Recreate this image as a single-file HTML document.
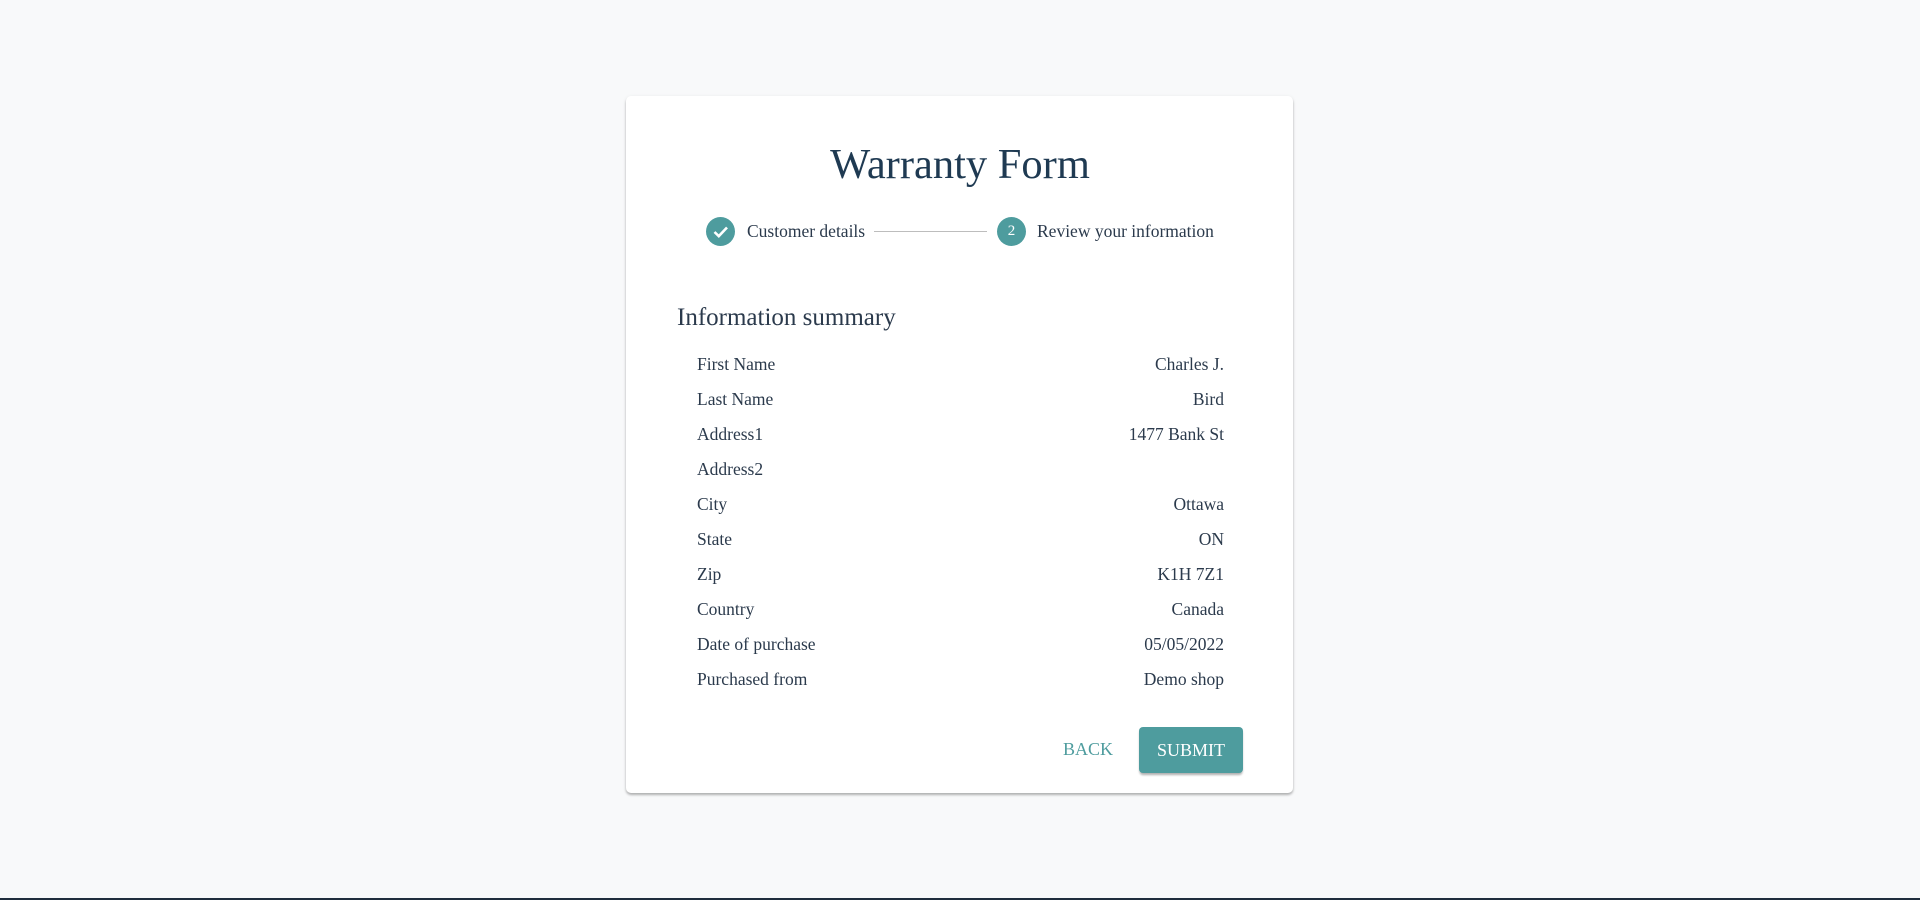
<!DOCTYPE html>
<html><head><meta charset="utf-8"><style>
html,body{margin:0;padding:0;width:1920px;height:900px;background:#f8f9fa;overflow:hidden;font-family:"Liberation Serif",serif;color:#2b3a4c}
.card{position:absolute;left:626px;top:96px;width:667px;height:697px;background:#fff;border-radius:5px;box-shadow:0 2px 2px rgba(0,0,0,.25),0 1px 4px rgba(0,0,0,.08)}
.abs{position:absolute;white-space:nowrap}
h1{position:absolute;margin:0;left:0;width:1920px;text-align:center;top:135px;font-weight:normal;font-size:42.5px;line-height:60px;color:#1f3a52}
.circ{position:absolute;width:29px;height:29px;border-radius:50%;background:#4e9c9e;color:#fff;font-size:15px;text-align:center;line-height:29px}
.step{font-size:17.5px;line-height:22px}
.row{position:absolute;left:697px;width:527px;font-size:17.5px;line-height:22px;display:flex;justify-content:space-between}
.sub{position:absolute;left:1139px;top:727px;width:104px;height:46px;background:#4e9c9e;border-radius:4px;color:#fff;font-size:18px;text-align:center;line-height:46px;box-shadow:0 3px 2px -1px rgba(0,0,0,.2),0 2px 2px rgba(0,0,0,.14)}
</style></head><body>
<div class="card"></div>
<h1>Warranty Form</h1>
<div class="circ" style="left:706px;top:217px"><svg width="29" height="29" viewBox="0 0 29 29"><path d="M8.5 15 L12.8 19.2 L21 10.5" fill="none" stroke="#fff" stroke-width="2.6"/></svg></div>
<div class="abs step" style="left:747px;top:220px">Customer details</div>
<div class="abs" style="left:874px;top:231px;width:113px;height:1px;background:#bdbdbd"></div>
<div class="circ" style="left:997px;top:217px">2</div>
<div class="abs step" style="left:1037px;top:220px">Review your information</div>
<div class="abs" style="left:677px;top:303px;font-size:25px;line-height:30px">Information summary</div>
<div class="row" style="top:353px"><span>First Name</span><span>Charles J.</span></div>
<div class="row" style="top:388px"><span>Last Name</span><span>Bird</span></div>
<div class="row" style="top:423px"><span>Address1</span><span>1477 Bank St</span></div>
<div class="row" style="top:458px"><span>Address2</span><span></span></div>
<div class="row" style="top:493px"><span>City</span><span>Ottawa</span></div>
<div class="row" style="top:528px"><span>State</span><span>ON</span></div>
<div class="row" style="top:563px"><span>Zip</span><span>K1H 7Z1</span></div>
<div class="row" style="top:598px"><span>Country</span><span>Canada</span></div>
<div class="row" style="top:633px"><span>Date of purchase</span><span>05/05/2022</span></div>
<div class="row" style="top:668px"><span>Purchased from</span><span>Demo shop</span></div>
<div class="abs" style="left:1063px;top:738px;font-size:18px;line-height:22px;color:#4e9c9e">BACK</div>
<div class="sub">SUBMIT</div>
<div class="abs" style="left:0;top:898px;width:1920px;height:2px;background:#1f2d3d"></div>
</body></html>
